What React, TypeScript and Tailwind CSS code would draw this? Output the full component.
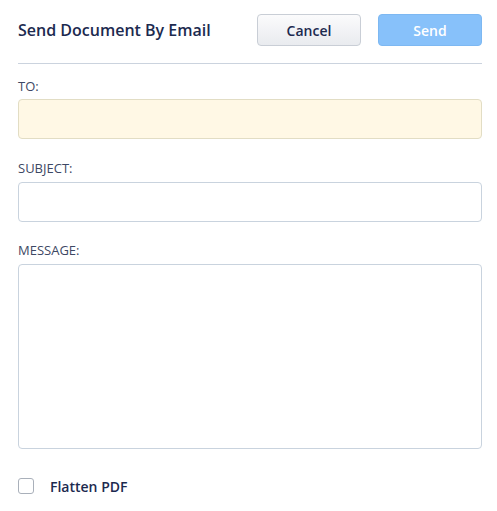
export default function App() {
  return (
    <div className="w-[497px] h-[511px] bg-white pl-[18px] pr-[15px] font-['Open_Sans',sans-serif]">
      <div className="flex items-center h-[64px] border-b border-[#cbd3de]">
        <h1 className="flex-1 text-[16px] font-semibold text-[#1c2a4f] -mt-[3px]">Send Document By Email</h1>
        <button className="w-[104px] h-[32px] mt-[-3px] rounded-[4px] border border-[#c9ced6] bg-gradient-to-b from-[#fbfbfc] to-[#e9ebef] text-[14px] font-semibold text-[#1c2a4f]">
          Cancel
        </button>
        <button className="ml-[17px] w-[104px] h-[32px] mt-[-3px] rounded-[4px] border border-[#7db8f2] bg-[#87c1fa] text-[14px] font-semibold text-white">
          Send
        </button>
      </div>
      <div className="flex flex-col">
        <label className="mt-[12px] text-[13px] font-normal text-[#3d4864] leading-[20px]">TO:</label>
        <input className="mt-[3px] h-[40px] rounded-[4px] border border-[#e2ddc4] bg-[#fff8e5] outline-none" />
        <label className="mt-[19px] text-[13px] font-normal text-[#3d4864] leading-[20px]">SUBJECT:</label>
        <input className="mt-[4px] h-[40px] rounded-[4px] border border-[#c9d3de] bg-white outline-none" />
        <label className="mt-[18px] text-[13px] font-normal text-[#3d4864] leading-[20px]">MESSAGE:</label>
        <textarea className="mt-[4px] h-[185px] rounded-[4px] border border-[#c9d3de] bg-white outline-none resize-none" />
        <label className="mt-[27px] h-[20px] flex items-center">
          <span className="w-[16px] h-[16px] rounded-[3px] border border-[#a9b0ba] bg-white" />
          <span className="ml-[16px] text-[14px] font-semibold text-[#1c2a4f]">Flatten PDF</span>
        </label>
      </div>
    </div>
  );
}
